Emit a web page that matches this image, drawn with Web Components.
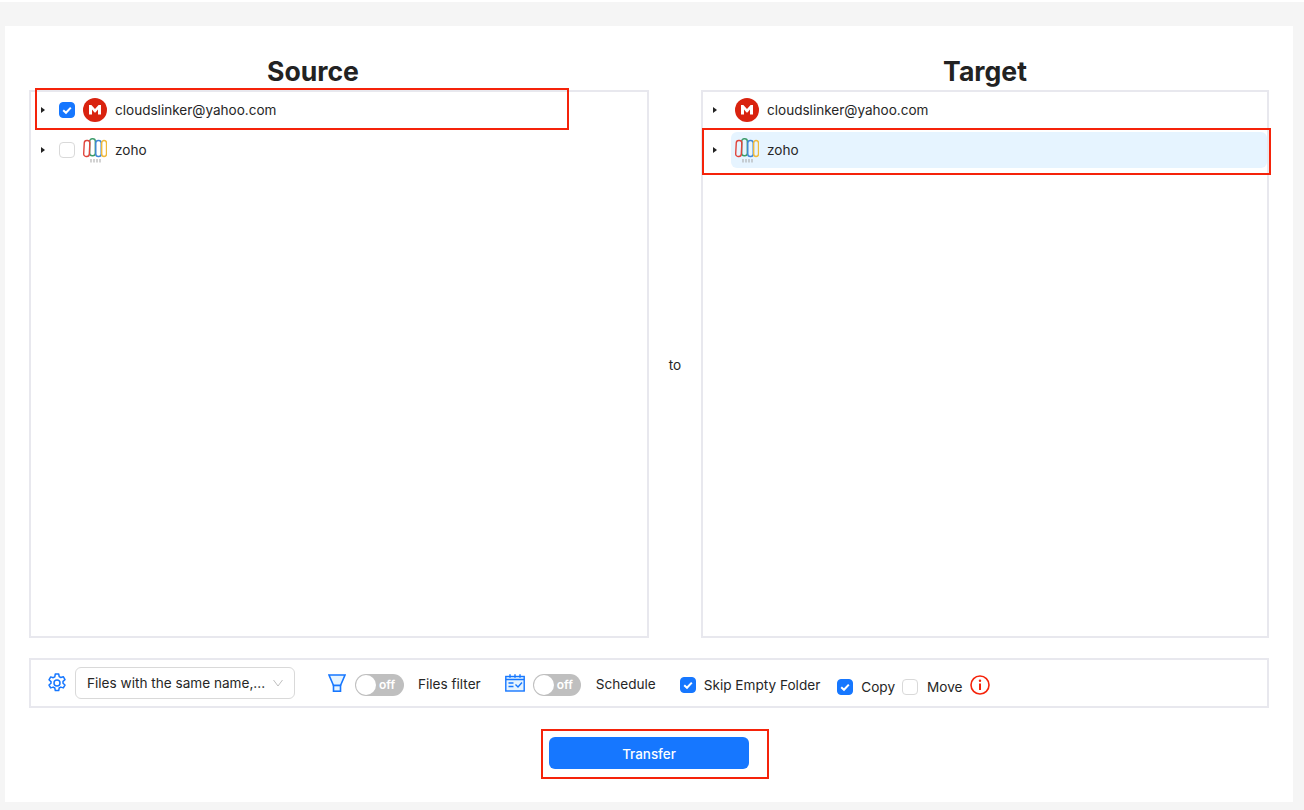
<!DOCTYPE html>
<html>
<head>
<meta charset="utf-8">
<title>Transfer</title>
<style>
    html, body { margin: 0; padding: 0; background: #fff; }
    body { font-family: Inter, "Liberation Sans", sans-serif; color: #262626; }
</style>
</head>
<body>
<transfer-page>
    <transfer-column slot="source" heading="Source">
        <tree-row cloud="mega" checkable checked marked="source">cloudslinker@yahoo.com</tree-row>
        <tree-row cloud="zoho" checkable>zoho</tree-row>
    </transfer-column>
    <transfer-column slot="target" heading="Target">
        <tree-row cloud="mega">cloudslinker@yahoo.com</tree-row>
        <tree-row cloud="zoho" selected marked="target">zoho</tree-row>
    </transfer-column>
    <option-bar slot="options"></option-bar>
</transfer-page>

<script>
const megaIcon = `<svg width="24" height="24" viewBox="0 0 24 24"><circle cx="12" cy="12" r="12" fill="#d9230f"/><path d="M6 16.500V7h2.400L12 11l3.600-4H18v9.500h-3v-5L12.500 14.500h-1L9 11.500v5z" fill="#fff"/></svg>`;
const zohoIcon = `<svg width="24" height="26" viewBox="0 0 24 26" fill="none" stroke-width="1.400">
    <rect x="6.700" y="1.700" width="5.600" height="17" rx="2.500" stroke="#3d9c6b"/>
    <rect x="1" y="3.500" width="5.600" height="16" rx="2.500" transform="rotate(3 4 11)" stroke="#e0443c"/>
    <rect x="12.800" y="3.500" width="5.400" height="16" rx="2.500" stroke="#3f86d8"/>
    <rect x="18.700" y="3.500" width="4.800" height="16" rx="2.500" stroke="#f0b93a"/>
    <path d="M8 22v3.500M11 22v3.500M14 22v3.500M17 22v3.500" stroke="#a5a5a5" stroke-width="1"/>
</svg>`;

class CheckMark extends HTMLElement {
    constructor() {
        super();
        this.attachShadow({ mode: 'open' });
        const on = this.hasAttribute('checked');
        this.shadowRoot.innerHTML = `
            <style>
                :host { display: inline-block; width: 16px; height: 16px; flex: none; }
                div { box-sizing: border-box; width: 16px; height: 16px; border-radius: 4px; border: 1px solid #d9d9d9; background: #fff; }
                div.on { background: #1677ff; border-color: #1677ff; }
                svg { display: block; }
            </style>
            <div class="${on ? 'on' : ''}">${on ? '<svg width="14" height="14" viewBox="0 0 14 14"><path d="M3.200 7.200 6 9.800 10.800 4.600" fill="none" stroke="#fff" stroke-width="2"/></svg>' : ''}</div>`;
    }
}
customElements.define('check-mark', CheckMark);

class TreeRow extends HTMLElement {
    constructor() {
        super();
        this.attachShadow({ mode: 'open' });
        const cloud = this.getAttribute('cloud') === 'mega' ? megaIcon : zohoIcon;
        const box = this.hasAttribute('checkable') ? `<check-mark ${this.hasAttribute('checked') ? 'checked' : ''}></check-mark>` : '';
        const mark = this.getAttribute('marked');
        this.shadowRoot.innerHTML = `
            <style>
                :host { display: flex; align-items: center; height: 40px; position: relative; font-size: 13.55px; line-height: 22px; color: #262626; }
                .arrow { width: 0; height: 0; margin-left: 10px; border-left: 4px solid #222; border-top: 3.5px solid transparent; border-bottom: 3.5px solid transparent; flex: none; }
                check-mark { margin-left: 14px; }
                .body { display: flex; align-items: center; height: 36px; margin-left: 14px; padding-left: 4px; flex: 1; border-radius: 6px; }
                :host([checkable]) .body { margin-left: 4px; }
                :host([selected]) .body { background: #e6f4ff; }
                .pic { width: 24px; height: 26px; display: flex; align-items: center; justify-content: center; flex: none; }
                .label { margin-left: 8px; }
                .mark { position: absolute; box-sizing: border-box; border: 2px solid #f5230a; pointer-events: none; }
                .mark.source { left: 4px; top: -2px; width: 534px; height: 42px; }
                .mark.target { left: -1px; top: -2px; width: 569px; height: 47px; }
            </style>
            <span class="arrow"></span>
            ${box}
            <div class="body"><span class="pic">${cloud}</span><span class="label"><slot></slot></span></div>
            ${mark ? `<div class="mark ${mark}"></div>` : ''}`;
    }
}
customElements.define('tree-row', TreeRow);

const columnTemplate = document.createElement('template');
columnTemplate.innerHTML = `
    <style>
        :host { display: flex; flex-direction: column; min-height: 0; }
        h2 { margin: 0; width: 568px; height: 34px; text-align: center; font-size: 26.6px; line-height: 30px; font-weight: 700; color: #222; flex: none; }
        .tree { box-sizing: border-box; flex: 1; border: 2px solid #e8e8ee; }
        .rows { margin-top: -2px; }
    </style>
    <h2></h2>
    <div class="tree"><div class="rows"><slot></slot></div></div>
`;

class TransferColumn extends HTMLElement {
    constructor() {
        super();
        this.attachShadow({ mode: 'open' });
        this.shadowRoot.appendChild(columnTemplate.content.cloneNode(true));
        this.shadowRoot.querySelector('h2').innerText = this.getAttribute('heading');
    }
}
customElements.define('transfer-column', TransferColumn);

class OffSwitch extends HTMLElement {
    constructor() {
        super();
        this.attachShadow({ mode: 'open' });
        this.shadowRoot.innerHTML = `
            <style>
                :host { display: inline-flex; flex: none; box-sizing: border-box; width: 49px; height: 22px; border-radius: 11px; background: #bfbfbf; align-items: center; position: relative; }
                i { position: absolute; left: 1px; top: 1px; width: 20px; height: 20px; border-radius: 50%; background: #fff; }
                span { position: absolute; left: 24px; top: 0; line-height: 22px; font-size: 12px; font-weight: 600; color: #fff; }
            </style>
            <i></i><span>off</span>`;
    }
}
customElements.define('off-switch', OffSwitch);

const barTemplate = document.createElement('template');
barTemplate.innerHTML = `
    <style>
        :host { display: flex; box-sizing: border-box; height: 50px; border: 2px solid #e8e8ee; align-items: center; font-size: 13.6px; color: #262626; padding-left: 16px; }
        svg { display: block; flex: none; }
        .picker { box-sizing: border-box; display: flex; align-items: center; justify-content: space-between; width: 220px; height: 32px; margin-left: 8px; padding: 0 11px; border: 1px solid #d9d9d9; border-radius: 6px; }
        .funnel { margin-left: 33px; }
        off-switch { margin-left: 9px; margin-top: 4px; }
        off-switch.second { margin-left: 8px; width: 48px; }
        .cal { margin-left: 24px; }
        .t { white-space: nowrap; }
        .t-filter { margin-left: 14px; margin-top: 2px; }
        .t-sched { margin-left: 15px; margin-top: 2px; }
        .skip { margin-left: 24px; margin-top: 4px; display: flex; align-items: center; }
        .skip span { margin-left: 8px; }
        .copy { display: flex; align-items: center; margin-left: 17px; margin-top: 8px; }
        .copy span { margin-left: 8px; }
        .move { display: flex; align-items: center; margin-left: 7px; margin-top: 8px; }
        .move span { margin-left: 9px; }
        .info { margin-left: 7px; margin-top: 4px; }
    </style>
    <svg width="20" height="20" viewBox="0 0 20 20" fill="none" stroke="#1677ff" stroke-width="1.500" stroke-linejoin="round">
        <path d="M8.300 1h3.400l.5 2.600 1.600.9 2.500-.8 1.700 2.900-2 1.800v1.800l2 1.800-1.700 2.900-2.500-.8-1.600.9-.5 2.600H8.300l-.5-2.600-1.600-.9-2.500.8-1.700-2.900 2-1.800V8.600l-2-1.800 1.700-2.900 2.500.8 1.600-.9z"/>
        <circle cx="10" cy="10" r="3"/>
    </svg>
    <div class="picker">
        <span class="t">Files with the same name,...</span>
        <svg width="10" height="8" viewBox="0 0 10 8" fill="none" stroke="#bfbfbf" stroke-width="1"><path d="M.5 1 5 7 9.500 1"/></svg>
    </div>
    <svg class="funnel" width="18" height="18" viewBox="0 0 18 18" fill="#e6f4ff" stroke="#1677ff" stroke-width="1.600">
        <path d="M1 1h16l-4.500 10.500h-7z"/><rect x="5.500" y="11.500" width="7" height="5.700"/>
    </svg>
    <off-switch></off-switch>
    <span class="t t-filter">Files filter</span>
    <svg class="cal" width="20" height="18" viewBox="0 0 20 18" fill="#e6f4ff" stroke="#1677ff" stroke-width="1.400">
        <rect x=".8" y="2.500" width="18.400" height="14.500"/>
        <path d="M.8 5.500h18.400M5 .2v3.500M10 .2v3.500M15 .2v3.500M3.500 9h5M3.500 12.500h5M10.500 10.500l2.500 2.500 4-4.500" fill="none"/>
    </svg>
    <off-switch class="second"></off-switch>
    <span class="t t-sched">Schedule</span>
    <div class="skip"><check-mark checked></check-mark><span>Skip Empty Folder</span></div>
    <div class="copy"><check-mark checked></check-mark><span>Copy</span></div>
    <div class="move"><check-mark></check-mark><span>Move</span></div>
    <svg class="info" width="20" height="20" viewBox="0 0 20 20" fill="none">
        <circle cx="10" cy="10" r="9" stroke="#f5230a" stroke-width="1.600"/>
        <circle cx="10" cy="5.800" r="1.200" fill="#f5230a"/>
        <path d="M10 8.500v6.500" stroke="#f5230a" stroke-width="2"/>
    </svg>
`;

class OptionBar extends HTMLElement {
    constructor() {
        super();
        this.attachShadow({ mode: 'open' });
        this.shadowRoot.appendChild(barTemplate.content.cloneNode(true));
    }
}
customElements.define('option-bar', OptionBar);

const pageTemplate = document.createElement('template');
pageTemplate.innerHTML = `
    <style>
        :host { display: block; box-sizing: border-box; width: 1304px; height: 810px; padding-top: 2px; }
        .backdrop { box-sizing: border-box; height: 808px; background: #f5f5f5; padding: 24px 11px 8px 5px; }
        .card { box-sizing: border-box; height: 776px; background: #fff; padding: 30px 24px 0; display: flex; flex-direction: column; }
        .columns { display: grid; grid-template-columns: 620px 52px 568px; height: 582px; }
        .to { display: flex; align-items: center; justify-content: center; font-size: 13.6px; padding-top: 36px; }
        .options { margin-top: 20px; }
        .action { display: flex; justify-content: center; margin-top: 29px; }
        .action-inner { position: relative; }
        button { display: block; width: 200px; height: 32px; border: 0; border-radius: 6px; background: #1677ff; color: #fff; font: 500 13.4px Inter, "Liberation Sans", sans-serif; padding: 2px 0 0; }
        .mark { position: absolute; left: -8px; top: -8px; width: 228px; height: 50px; box-sizing: border-box; border: 2px solid #f5230a; pointer-events: none; }
    </style>
    <div class="backdrop">
        <div class="card">
            <div class="columns">
                <slot name="source"></slot>
                <div class="to">to</div>
                <slot name="target"></slot>
            </div>
            <div class="options"><slot name="options"></slot></div>
            <div class="action">
                <div class="action-inner"><button>Transfer</button><div class="mark"></div></div>
            </div>
        </div>
    </div>
`;

class TransferPage extends HTMLElement {
    constructor() {
        super();
        this.attachShadow({ mode: 'open' });
        this.shadowRoot.appendChild(pageTemplate.content.cloneNode(true));
    }
}
customElements.define('transfer-page', TransferPage);
</script>
</body>
</html>
